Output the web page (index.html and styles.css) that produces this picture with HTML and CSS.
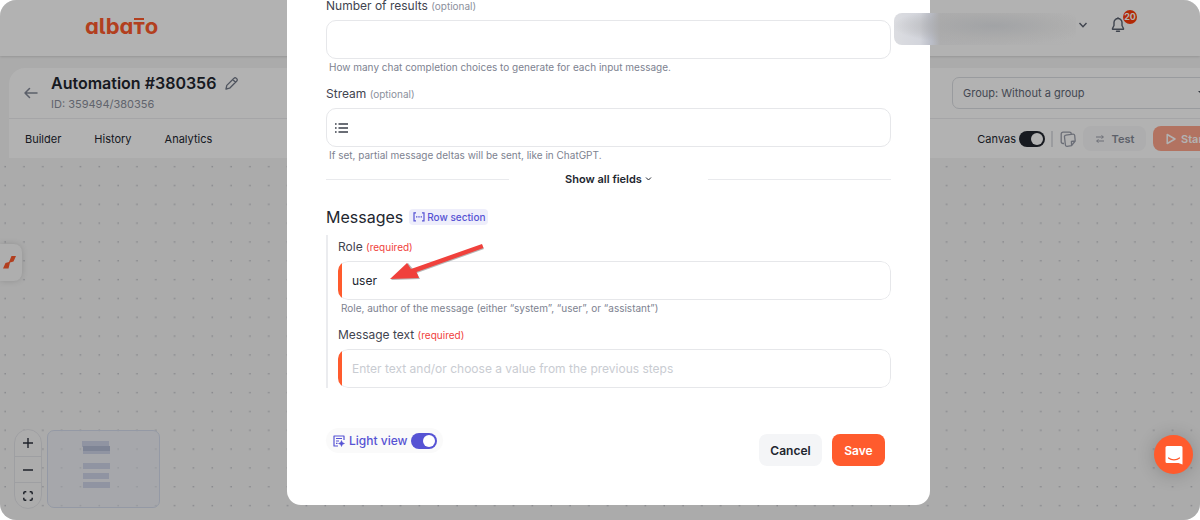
FILE: index.html
```
<!DOCTYPE html>
<html lang="en">

<head>
    <meta charset="UTF-8">
    <title>Automation #380356 | Albato</title>
    <link rel="stylesheet" href="styles.css">
</head>

<body>
    <div class="app">
        <header class="topbar">
            <a class="logo" href="#" aria-label="albato">alba<span class="logo-t">т</span>o</a>
            <div class="account">
                <button class="icon-btn" type="button" aria-label="Account menu">
                    <svg width="10" height="10" viewBox="0 0 10 10" fill="none" stroke="#5b6270" stroke-width="1.4"><path d="M1.5 3l3.5 3.7L8.5 3"/></svg>
                </button>
                <button class="icon-btn bell" type="button" aria-label="Notifications">
                    <svg width="14" height="16" viewBox="0 0 14 16" fill="none" stroke="#5b6270" stroke-width="1.4" stroke-linejoin="round" stroke-linecap="round"><path d="M7 1.5a4 4 0 0 0-4 4v3L1.5 11.5v.8h11v-.8L11 8.5v-3a4 4 0 0 0-4-4zM5.5 14.3h3M7 .7v.8"/></svg>
                    <span class="badge">20</span>
                </button>
            </div>
        </header>

        <section class="panel">
            <div class="panel-head">
                <a class="back" href="#" aria-label="Back">
                    <svg width="14" height="12" viewBox="0 0 14 12" fill="none" stroke="#838997" stroke-width="1.5" stroke-linecap="round" stroke-linejoin="round"><path d="M13 6H1M5.5 1.5L1 6l4.5 4.5"/></svg>
                </a>
                <div class="title">
                    <h1>Automation #380356
                        <svg width="13" height="13" viewBox="0 0 13 13" fill="none" stroke="#737a89" stroke-width="1.3" stroke-linejoin="round"><path d="M1 12l.8-3.6L9 1.2a1.5 1.5 0 0 1 2.2 0l.6.6a1.5 1.5 0 0 1 0 2.2L4.6 11.2zM7.7 2.5l2.8 2.8"/></svg>
                    </h1>
                    <p>ID: 359494/380356</p>
                </div>
                <div class="group">
                    <select aria-label="Group">
                        <option>Group: Without a group</option>
                    </select>
                    <svg width="8" height="6" viewBox="0 0 8 6"><path d="M0 1h8L4 5z" fill="#4a4f5a"/></svg>
                </div>
            </div>
            <div class="toolbar">
                <nav class="tabs">
                    <a href="#">Builder</a>
                    <a href="#">History</a>
                    <a href="#">Analytics</a>
                </nav>
                <div class="actions">
                    <label class="canvas-label" for="canvas">Canvas</label>
                    <input class="switch dark" type="checkbox" id="canvas" checked>
                    <span class="line"></span>
                    <button class="icon-btn copy" type="button" aria-label="Copy">
                        <svg width="16" height="16" viewBox="0 0 16 16" fill="none" stroke="#9a9eab" stroke-width="1.3" stroke-linejoin="round"><path d="M4 12.5H3A1.8 1.8 0 0 1 1.2 10.7V3A1.8 1.8 0 0 1 3 1.2h6.5A1.8 1.8 0 0 1 11.3 3"/><path d="M5.8 4.2l7.2-1a1.5 1.5 0 0 1 1.7 1.3l.5 5.5-3.6 4.7-4.5.6a1.5 1.5 0 0 1-1.7-1.3L4.5 6a1.5 1.5 0 0 1 1.3-1.8zM15.2 10l-3.8.4.2 4.3"/></svg>
                    </button>
                    <button class="btn test" type="button">
                        <svg width="10" height="8" viewBox="0 0 10 8" fill="none" stroke="#9a9eab" stroke-width="1"><path d="M1 2h7M6.5.5L8.5 2 6.5 3.5M9 6H2M3.5 4.5L1.5 6l2 1.5"/></svg>
                        Test
                    </button>
                    <button class="btn start" type="button">
                        <svg width="10" height="12" viewBox="0 0 10 12" fill="none" stroke="#fff" stroke-width="1.5" stroke-linejoin="round"><path d="M1.2 1.5L9 6l-7.8 4.5z"/></svg>
                        Start
                    </button>
                </div>
            </div>
        </section>

        <!-- canvas grid -->
        <svg class="grid" aria-hidden="true">
            <pattern id="dots" width="18.83" height="18.83" patternUnits="userSpaceOnUse">
                <rect x="4.5" y="8" width="1.3" height="1.3" fill="#b4b6bd"/>
            </pattern>
            <rect width="100%" height="100%" fill="url(#dots)"/>
        </svg>

        <button class="side-tab" type="button" aria-label="Open menu">
            <svg width="13" height="13" viewBox="0 0 13 13" fill="#ff5b2d"><path d="M8.5 0H13L10.5 5.5 7 6.5 5.5 12.5H0L2.5 7 6 6z"/></svg>
        </button>

        <div class="zoom">
            <button type="button" aria-label="Zoom in">
                <svg width="10" height="10" viewBox="0 0 10 10" stroke="#2b303b" stroke-width="1.4"><path d="M5 0v10M0 5h10"/></svg>
            </button>
            <button type="button" aria-label="Zoom out">
                <svg width="10" height="10" viewBox="0 0 10 10" stroke="#2b303b" stroke-width="1.6"><path d="M0 5h10"/></svg>
            </button>
            <button type="button" aria-label="Fit view">
                <svg width="10" height="10" viewBox="0 0 10 10" fill="none" stroke="#2b303b" stroke-width="1.5"><path d="M.8 3.3V2A1.2 1.2 0 0 1 2 .8h1.3M6.7.8H8A1.2 1.2 0 0 1 9.2 2v1.3M9.2 6.7V8A1.2 1.2 0 0 1 8 9.2H6.7M3.3 9.2H2A1.2 1.2 0 0 1 .8 8V6.7"/></svg>
            </button>
        </div>

        <div class="minimap">
            <svg width="111" height="76" viewBox="0 0 111 76" fill="#ced4e8">
                <rect x="34" y="10" width="27" height="6"/>
                <rect x="35" y="15" width="27" height="6" fill="#b5bdd6"/>
                <rect x="35" y="20" width="27" height="3"/>
                <rect x="35" y="32" width="27" height="6"/>
                <rect x="35" y="42" width="26" height="6"/>
                <rect x="35" y="51" width="27" height="6"/>
            </svg>
        </div>

        <div class="overlay">
            <form class="modal">
                <div class="field">
                    <label for="results">Number of results <small>(optional)</small></label>
                    <input class="control" type="text" id="results">
                    <p class="hint">How many chat completion choices to generate for each input message.</p>
                </div>
                <div class="field">
                    <label for="stream">Stream <small>(optional)</small></label>
                    <div class="with-icon">
                        <input class="control" type="text" id="stream">
                        <svg width="13" height="10" viewBox="0 0 13 10" stroke="#3a3f4a" stroke-width="1.4"><path d="M0 1h1.6M3.5 1H13M0 5h1.6M3.5 5H13M0 9h1.6M3.5 9H13"/></svg>
                    </div>
                    <p class="hint">If set, partial message deltas will be sent, like in ChatGPT.</p>
                </div>

                <div class="show-all">
                    <button type="button">Show all fields
                        <svg width="7" height="6" viewBox="0 0 7 6" fill="none" stroke="#22262f" stroke-width="1"><path d="M1 1.5L3.5 4 6 1.5"/></svg>
                    </button>
                </div>

                <div class="section-head">
                    <h2>Messages</h2>
                    <span class="tag">
                        <svg width="12" height="10" viewBox="0 0 12 10" fill="none" stroke="#5653d4" stroke-width="1.2"><path d="M3 .8H1v8h2M9 .8h2v8H9M3 4.8h1.4M5.3 4.8h1.4M7.6 4.8H9"/></svg>
                        Row section
                    </span>
                </div>
                <div class="section">
                    <div class="field">
                        <label for="role">Role <small class="required">(required)</small></label>
                        <div class="mark"><input class="control" type="text" id="role" value="user"></div>
                        <p class="hint">Role, author of the message (either “system”, “user”, or “assistant”)</p>
                    </div>
                    <div class="field">
                        <label for="message">Message text <small class="required">(required)</small></label>
                        <div class="mark"><input class="control" type="text" id="message" placeholder="Enter text and/or choose a value from the previous steps"></div>
                    </div>
                    <svg class="arrow" width="98" height="42" viewBox="0 0 98 42">
                        <path d="M94 2l2 4-67 24 3 6L3 37 20 20l5 6z" fill="#6d6d6d" opacity=".5"/>
                        <path d="M94 1l1.5 4-67 24L31 35 2 36 19 20l4 6z" fill="#f0413c"/>
                    </svg>
                </div>

                <div class="modal-foot">
                    <div class="light">
                        <svg width="12" height="12" viewBox="0 0 12 12" fill="none" stroke="#5653d4" stroke-width="1.2" stroke-linejoin="round"><path d="M5 11H1V1h10v4M3 3.5h6M3 6h3M3 8.3h1.5"/><path d="M8.5 5.5l.9 2.1 2.1.9-2.1.9-.9 2.1-.9-2.1-2.1-.9 2.1-.9z" fill="#5653d4" stroke-width=".5"/></svg>
                        <label for="light">Light view</label>
                        <input class="switch" type="checkbox" id="light" checked>
                    </div>
                    <div class="buttons">
                        <button class="btn cancel" type="button">Cancel</button>
                        <button class="btn save" type="submit">Save</button>
                    </div>
                </div>
            </form>
        </div>

        <div class="account-blur"></div>

        <button class="chat" type="button" aria-label="Open chat">
            <svg width="20" height="20" viewBox="0 0 20 20"><path d="M3 1h14a1.5 1.5 0 0 1 1.5 1.5V19.5L14.5 18H3A1.5 1.5 0 0 1 1.5 16.5v-14A1.5 1.5 0 0 1 3 1z" fill="#fff"/><path d="M4.5 13c3 2.5 8 2.5 11 0" fill="none" stroke="#ff5b2d" stroke-width="1.2" stroke-linecap="round"/></svg>
        </button>
    </div>
</body>

</html>
```
FILE: styles.css
```
* {
    box-sizing: border-box;
}

body {
    margin: 0;
    font-family: Inter, "Liberation Sans", sans-serif;
    font-size: 11px;
    color: #22262f;
    background: #fff;
}

h1,
h2,
p {
    margin: 0;
}

a {
    color: inherit;
    text-decoration: none;
}

button,
input,
select {
    font: inherit;
    margin: 0;
    color: inherit;
}

button {
    padding: 0;
    border: none;
    background: none;
}

svg {
    display: block;
    flex: none;
}

.app {
    position: relative;
    display: flex;
    flex-direction: column;
    min-height: 100vh;
    overflow: hidden;
    border-radius: 16px;
    background: #f5f5f5;
}

/* top bar */
.topbar {
    display: flex;
    align-items: flex-start;
    justify-content: space-between;
    height: 56px;
    padding: 13px 75px 0 85px;
    background: #fff;
    box-shadow: 0 1px 2px rgba(0, 0, 0, .12);
}

.logo {
    font-size: 22px;
    font-weight: 700;
    line-height: 26px;
    color: #ff5b2d;
    font-feature-settings: "cv11", "ss02";
}

.logo-t {
    position: relative;
}

.logo-t::before {
    content: "";
    position: absolute;
    top: 5px;
    left: 1px;
    right: 1px;
    height: 2px;
    background: #ff5b2d;
}

.account {
    display: flex;
    align-items: center;
    gap: 23px;
    height: 24px;
}

.bell {
    position: relative;
}

.badge {
    position: absolute;
    top: -7px;
    left: 12px;
    width: 14px;
    height: 14px;
    border-radius: 7px;
    font-size: 9px;
    font-weight: 700;
    line-height: 14px;
    text-align: center;
    color: #fff;
    background: #ff3b0a;
}

/* automation panel */
.panel {
    margin: 12px -40px 0 9px;
    border-radius: 16px 0 0 0;
    background: #fff;
}

.panel-head {
    display: flex;
    align-items: center;
    height: 51px;
    padding: 0 16px 0 15px;
    border-bottom: 1px solid #ececef;
}

.back {
    margin-right: 13px;
}

.title {
    flex: 1;
    padding-bottom: 4px;
}

h1 {
    display: flex;
    align-items: center;
    gap: 9px;
    font-size: 16px;
    font-weight: 600;
    line-height: 26px;
}

.title p {
    line-height: 16px;
    color: #8b909c;
}

.group {
    position: relative;
    width: 272px;
}

.group select {
    width: 100%;
    height: 32px;
    padding: 0 10px;
    border: 1px solid #dcdee3;
    border-radius: 7px;
    appearance: none;
    color: #626876;
    background: #fff;
}

.group svg {
    position: absolute;
    top: 13px;
    right: 18px;
}

.toolbar {
    display: flex;
    align-items: center;
    justify-content: space-between;
    height: 39px;
    padding: 0 16px;
}

.tabs {
    display: flex;
    gap: 33px;
}

.actions {
    display: flex;
    align-items: center;
}

.canvas-label {
    margin-right: 3px;
}

.line {
    width: 2px;
    height: 16px;
    margin: 0 7px 0 6px;
    background: #dfe0e4;
}

.switch {
    position: relative;
    width: 26px;
    height: 16px;
    border-radius: 8px;
    appearance: none;
    background: #5653d4;
}

.switch::before {
    content: "";
    position: absolute;
    top: 2px;
    right: 2px;
    width: 12px;
    height: 12px;
    border-radius: 50%;
    background: #fff;
}

.switch.dark {
    background: #22262f;
}

.btn {
    display: flex;
    align-items: center;
    justify-content: center;
    height: 32px;
    border-radius: 8px;
    font-weight: 600;
}

.test {
    gap: 7px;
    width: 63px;
    height: 25px;
    margin: 0 7px;
    color: #858a97;
    background: #f8f8f9;
}

.start {
    justify-content: flex-start;
    gap: 5px;
    width: 71px;
    height: 25px;
    padding-left: 13px;
    color: #fff;
    background: #ffa58c;
}

.grid {
    flex: 1;
    width: 100%;
}

.side-tab {
    position: absolute;
    top: 244px;
    left: 0;
    width: 22px;
    height: 37px;
    padding-left: 3px;
    border-radius: 0 8px 8px 0;
    background: #f9f9f9;
    box-shadow: 0 0 6px rgba(0, 0, 0, .15);
}

.zoom {
    position: absolute;
    bottom: 11px;
    left: 14px;
    border: 1px solid #e3e4e8;
    border-radius: 14px;
    background: #f7f7f7;
}

.zoom button {
    display: flex;
    align-items: center;
    justify-content: center;
    width: 26px;
    height: 26px;
}

.zoom button + button {
    border-top: 1px solid #e3e4e8;
}

.minimap {
    position: absolute;
    bottom: 12px;
    left: 47px;
    border: 1px solid #d5dcec;
    border-radius: 7px;
    background: rgba(232, 236, 245, .5);
}

/* modal */
.overlay {
    position: absolute;
    top: 0;
    right: 0;
    bottom: 0;
    left: 0;
    display: flex;
    align-items: flex-start;
    justify-content: center;
    padding-left: 17px;
    background: rgba(0, 0, 0, .3);
}

.modal {
    width: 643px;
    padding: 0 39px 39px;
    border-radius: 0 0 14px 14px;
    background: #fff;
}

.field + .field {
    margin-top: 10px;
}

.field label {
    display: block;
    margin-bottom: 6px;
    font-size: 12px;
    line-height: 16px;
    color: #3f444f;
}

.modal > .field:first-child label {
    margin-bottom: 8px;
    line-height: 12px;
}

.field small {
    font-size: 10px;
    line-height: 10px;
    color: #8b909c;
}

.field .required {
    color: #f0413c;
}

.control {
    display: block;
    width: 100%;
    height: 39px;
    padding: 0 13px;
    border: 1px solid #e6e7ea;
    border-radius: 10px;
    font-size: 12px;
    background: #fff;
}

.control::placeholder {
    color: #c9ccd2;
}

.hint {
    padding-left: 3px;
    font-size: 10px;
    line-height: 17px;
    color: #7d8290;
}

.with-icon {
    position: relative;
}

.with-icon svg {
    position: absolute;
    top: 15px;
    left: 9px;
}

.with-icon .control {
    padding-left: 30px;
}

.mark {
    position: relative;
    overflow: hidden;
    border-radius: 10px;
}

.mark::before {
    content: "";
    position: absolute;
    top: 0;
    bottom: 0;
    left: 0;
    width: 4px;
    background: #ff5b2d;
}

.show-all {
    display: flex;
    align-items: center;
    gap: 56px;
    margin-top: 7px;
}

.show-all::before,
.show-all::after {
    content: "";
    flex: 1;
    height: 1px;
    background: #e9eaed;
}

.show-all button {
    display: flex;
    align-items: center;
    gap: 3px;
    font-weight: 600;
    line-height: 16px;
}

.section-head {
    display: flex;
    align-items: center;
    gap: 6px;
    margin: 18px 0 6px;
}

h2 {
    font-size: 16px;
    font-weight: 400;
    line-height: 24px;
}

.tag {
    display: flex;
    align-items: center;
    gap: 2px;
    padding: 0 3px 0 4px;
    border-radius: 4px;
    font-size: 10px;
    font-weight: 500;
    line-height: 16px;
    color: #5653d4;
    background: #eeeefb;
}

.section {
    position: relative;
    padding: 4px 0 0 10px;
    border-left: 2px solid #ebecef;
}

/* pointer to the role field */
.arrow {
    position: absolute;
    top: 8px;
    left: 60px;
}

.modal-foot {
    display: flex;
    align-items: flex-start;
    justify-content: space-between;
    margin-top: 40px;
    padding-right: 6px;
}

.light {
    display: flex;
    align-items: center;
    gap: 4px;
    height: 25px;
    padding: 0 6px 0 7px;
    border-radius: 13px;
    font-size: 12px;
    font-weight: 500;
    color: #5653d4;
    background: #fafafa;
}

.buttons {
    display: flex;
    gap: 10px;
    margin-top: 6px;
}

.buttons .btn {
    font-size: 12px;
}

.cancel {
    width: 63px;
    background: #f4f5f7;
}

.save {
    width: 53px;
    color: #fff;
    background: #ff5b2d;
}

/* hidden account name */
.account-blur {
    position: absolute;
    top: 13px;
    right: 124px;
    width: 182px;
    height: 32px;
    border-radius: 8px;
    background:
        radial-gradient(ellipse at 55% 40%, rgba(158, 160, 163, .8), rgba(168, 168, 168, .5) 45%, rgba(178, 178, 178, 0) 72%),
        linear-gradient(90deg, #dcdde1 0, #d3d5dc 26px, #b9bcc6 38px, #adadae 46px, #b2b2b2 100%);
}

.chat {
    position: absolute;
    right: 7px;
    bottom: 46px;
    display: flex;
    align-items: center;
    justify-content: center;
    width: 39px;
    height: 39px;
    border-radius: 50%;
    background: #ff5b2d;
    box-shadow: 0 1px 18px rgba(0, 0, 0, .2);
}
```
